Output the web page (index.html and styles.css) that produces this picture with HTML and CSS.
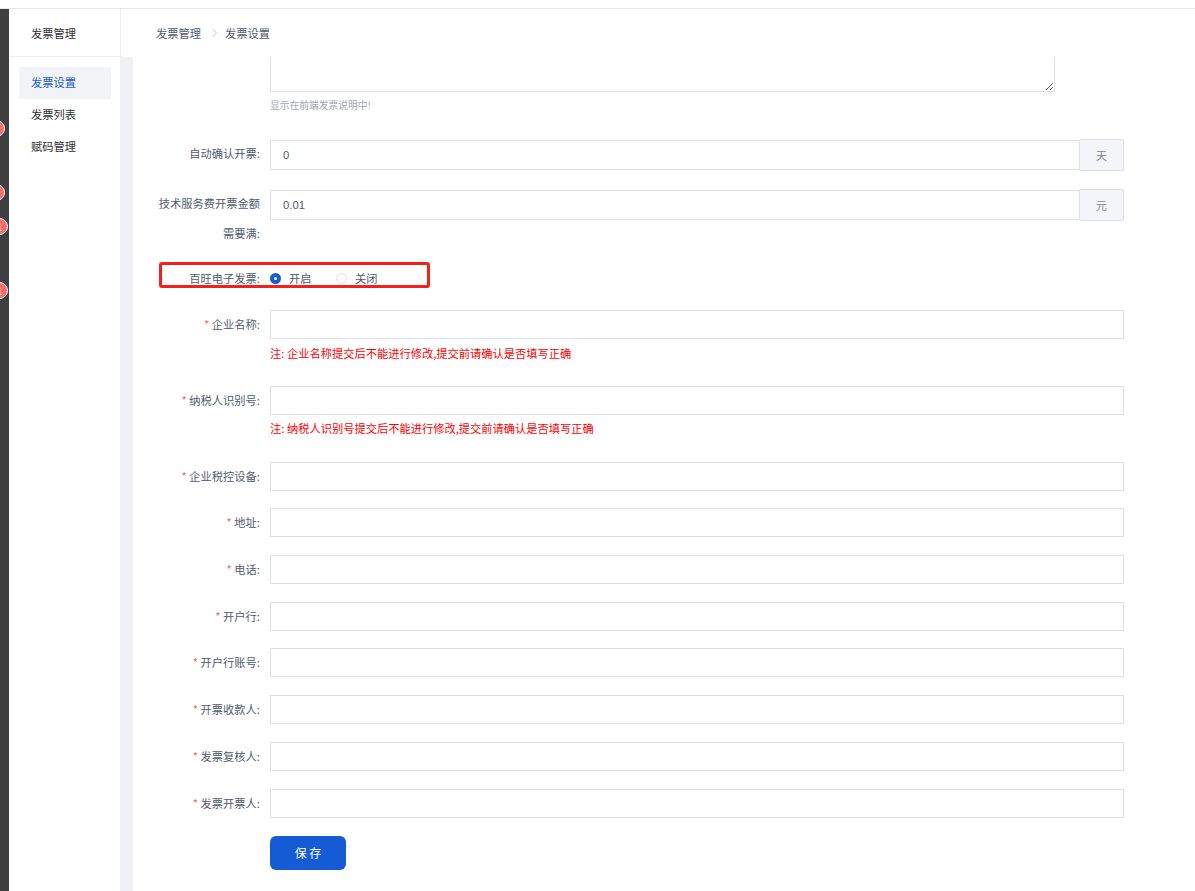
FILE: index.html
```
<!DOCTYPE html>
<html lang="zh-CN">
<head>
<meta charset="utf-8">
<title>发票设置</title>
<link rel="stylesheet" href="styles.css">
</head>
<body>
<div class="topline"></div>
<div class="app">
  <aside class="rail">
    <span class="badge b1">1</span>
    <span class="badge b2">1</span>
    <span class="badge b3">1</span>
    <span class="badge b4">1</span>
  </aside>
  <nav class="side">
    <div class="side-title">发票管理</div>
    <ul class="menu">
      <li class="menu-item active">发票设置</li>
      <li class="menu-item">发票列表</li>
      <li class="menu-item">赋码管理</li>
    </ul>
  </nav>
  <div class="right">
    <header class="crumbs">
      <span>发票管理</span>
      <svg class="sep" width="7" height="10" viewBox="0 0 7 10"><path d="M1.5 1l4 4-4 4" fill="none" stroke="#c5c8ce" stroke-width="1"/></svg>
      <span>发票设置</span>
    </header>
    <div class="body">
      <div class="gutter"></div>
      <main class="main">
        <div class="ta-wrap"><textarea class="ta"></textarea></div>
        <p class="hint">显示在前端发票说明中!</p>

        <div class="row r-auto">
          <label class="lab">自动确认开票:</label>
          <div class="group"><input class="inp flat" value="0"><span class="addon">天</span></div>
        </div>
        <div class="row r-fee">
          <label class="lab two">技术服务费开票金额需要满:</label>
          <div class="group"><input class="inp flat" value="0.01"><span class="addon">元</span></div>
        </div>
        <div class="row r-radio">
          <div class="mark"></div>
          <label class="lab">百旺电子发票:</label>
          <div class="radios">
            <span class="radio"><i class="dot on"></i>开启</span>
            <span class="radio"><i class="dot"></i>关闭</span>
          </div>
        </div>
        <div class="row r-a">
          <label class="lab"><em>*</em> 企业名称:</label>
          <div class="fld"><input class="inp"><p class="note">注: 企业名称提交后不能进行修改,提交前请确认是否填写正确</p></div>
        </div>
        <div class="row r-b">
          <label class="lab"><em>*</em> 纳税人识别号:</label>
          <div class="fld"><input class="inp"><p class="note">注: 纳税人识别号提交后不能进行修改,提交前请确认是否填写正确</p></div>
        </div>
        <div class="row r-c"><label class="lab"><em>*</em> 企业税控设备:</label><input class="inp"></div>
        <div class="row r-s r-first"><label class="lab"><em>*</em> 地址:</label><input class="inp"></div>
        <div class="row r-s"><label class="lab"><em>*</em> 电话:</label><input class="inp"></div>
        <div class="row r-s"><label class="lab"><em>*</em> 开户行:</label><input class="inp"></div>
        <div class="row r-s"><label class="lab"><em>*</em> 开户行账号:</label><input class="inp"></div>
        <div class="row r-s"><label class="lab"><em>*</em> 开票收款人:</label><input class="inp"></div>
        <div class="row r-s"><label class="lab"><em>*</em> 发票复核人:</label><input class="inp"></div>
        <div class="row r-s"><label class="lab"><em>*</em> 发票开票人:</label><input class="inp"></div>
        <div class="actions"><button class="save">保 存</button></div>
      </main>
    </div>
  </div>
</div>
</body>
</html>
```
FILE: styles.css
```
* { box-sizing: border-box; }
html, body { margin: 0; height: 100%; overflow: hidden; background: #fff; }
body { font: 11.25px/1.5 "Noto Sans CJK SC", "Liberation Sans", sans-serif; color: #515a6e; }
p, ul { margin: 0; padding: 0; }
.topline { height: 9px; border-bottom: 1px solid #e8e8e8; }
.app { display: flex; height: 882px; overflow: hidden; }
.rail { width: 9px; flex: none; background: #3f3f3f; position: relative; }
.badge { position: absolute; width: 17px; height: 17px; border-radius: 50%; background: #f56c6c; border: 1px solid #fff; color: #fff; font-size: 10px; line-height: 15px; text-align: center; }
.b1 { left: -12px; top: 111px; }
.b2 { left: -12px; top: 175px; }
.b3 { left: -9px; top: 209px; }
.b4 { left: -9px; top: 273px; }
.side { width: 112px; flex: none; border-right: 1px solid #eee; background: #fff; }
.side-title { height: 48px; line-height: 48px; padding-left: 22px; color: #303133; border-bottom: 1px solid #eee; }
.menu { list-style: none; padding: 10px 9px 0 10px; }
.menu-item { height: 32px; line-height: 31px; padding-left: 12px; color: #303133; border-radius: 2px; }
.menu-item.active { background: #f2f3f5; color: #155bd4; }
.right { flex: 1; min-width: 0; display: flex; flex-direction: column; }
.crumbs { height: 48px; flex: none; display: flex; align-items: center; gap: 7px; padding: 0 0 0 35px; color: #515a6e; }
.sep { margin: 0 0 0 3px; }
.body { flex: 1; display: flex; min-height: 0; }
.gutter { width: 13px; flex: none; margin-left: -1px; background: #f0f1f5; }
.main { flex: 1; min-width: 0; padding: 0 71px 0 0; }
.ta-wrap { margin-left: 137px; height: 35px; overflow: hidden; }
.ta { display: block; width: 785px; height: 60px; margin-top: -25px; border: 1px solid #dcdee8; background: #fff; outline: 0; padding: 0; resize: both; }
.hint { margin: 4px 0 0 137px; height: 18px; line-height: 18px; color: #a0a5ad; font-size: 9.75px; }
.row { display: flex; position: relative; }
.lab { width: 127px; flex: none; margin-right: 10px; text-align: right; color: #515a6e; line-height: 28px; }
.lab em { color: #ed6a5a; font-style: normal; }
.r-auto .lab, .r-fee .lab { line-height: 30px; margin-top: -1px; }
.lab.two { padding-left: 25px; }
.inp { flex: 1; min-width: 0; display: block; width: 100%; height: 28.9px; border: 1px solid #dcdee8; background: #fff; padding: 0 12px; font: 11.25px "Liberation Sans", sans-serif; color: #515a6e; outline: 0; border-radius: 0; }
.fld { flex: 1; min-width: 0; }
.note { color: #f00; line-height: 18px; margin-top: 4.225px; }
.r-a .note { margin-top: 5.225px; }
.group { flex: 1; min-width: 0; display: flex; align-items: center; height: 32px; }
.group .inp { height: 30px; border-right: 0; }
.addon { width: 45px; height: 32px; flex: none; background: #f4f5f9; border: 1px solid #dcdee8; border-radius: 2px; color: #808695; text-align: center; line-height: 30px; }
.r-auto { margin-top: 25px; }
.r-fee { margin-top: 18px; height: 60px; }
.r-radio { margin-top: 19px; height: 20px; align-items: center; }
.r-radio .lab { line-height: 20px; }
.mark { position: absolute; left: 26px; top: -6px; width: 271px; height: 26px; border: 3px solid #f5201a; border-radius: 3px; }
.radios { display: flex; gap: 24px; }
.radio { display: flex; align-items: center; gap: 8px; width: 42px; white-space: nowrap; }
.dot { width: 11px; height: 11px; border-radius: 50%; border: 1px solid #dcdee8; background: #fff; flex: none; position: relative; }
.dot.on { border: 0; background: #155bd4; }
.dot.on::after { content: ""; position: absolute; left: 4px; top: 4px; width: 3px; height: 3px; border-radius: 50%; background: #fff; }
.r-a { margin-top: 22px; }
.r-b { margin-top: 23.9px; }
.r-c { margin-top: 25.1px; }
.r-s { margin-top: 17.975px; }
.r-s.r-first { margin-top: 16.8px; }
.actions { margin: 17.975px 0 0 137px; }
.save { display: block; width: 76px; height: 33.75px; background: #155bd4; color: #fff; border: 0; border-radius: 6px; font: 12px "Noto Sans CJK SC", sans-serif; }
```
